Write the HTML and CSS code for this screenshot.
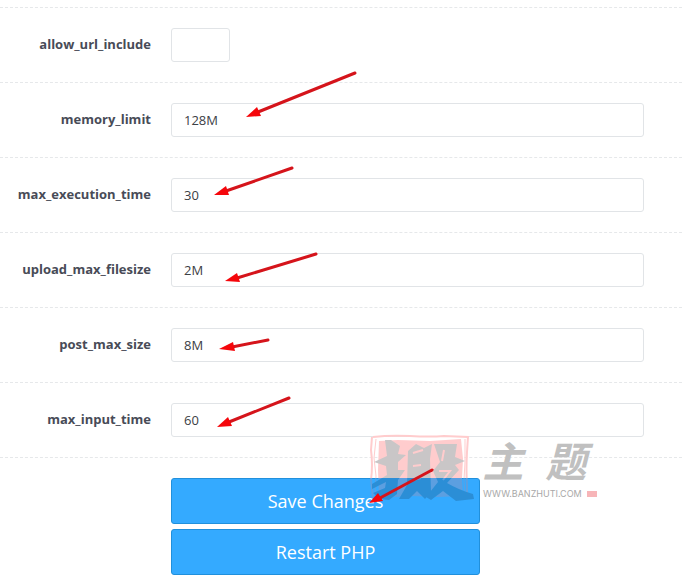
FILE: index.html
```html
<!DOCTYPE html>
<html lang="en">
<head>
<meta charset="utf-8">
<title>PHP Settings</title>
<link rel="stylesheet" href="styles.css">
</head>
<body>
<form class="settings">
  <div class="rows">
    <div class="row"><label for="include">allow_url_include</label><input class="short" id="include" type="text" value=""></div>
    <div class="row"><label for="memory">memory_limit</label><input id="memory" type="text" value="128M"></div>
    <div class="row"><label for="execution">max_execution_time</label><input id="execution" type="text" value="30"></div>
    <div class="row"><label for="upload">upload_max_filesize</label><input id="upload" type="text" value="2M"></div>
    <div class="row"><label for="post">post_max_size</label><input id="post" type="text" value="8M"></div>
    <div class="row"><label for="inputtime">max_input_time</label><input id="inputtime" type="text" value="60"></div>
  </div>
  <div class="actions">
    <button type="button">Save Changes</button>
    <button type="button">Restart PHP</button>
  </div>
</form>
<svg class="overlay" width="682" height="577" viewBox="0 0 682 577">
  <defs>
    <linearGradient id="ink" gradientUnits="userSpaceOnUse" x1="0" y1="430" x2="0" y2="510">
      <stop offset=".6" stop-color="#c9c6c7"/><stop offset=".6" stop-color="#2b8ed6"/>
    </linearGradient>
    <linearGradient id="pink" gradientUnits="userSpaceOnUse" x1="0" y1="430" x2="0" y2="510">
      <stop offset=".6" stop-color="#ffcccd"/><stop offset=".6" stop-color="#5c9fe0"/>
    </linearGradient>
  </defs>
  <path fill="url(#pink)" d="M379 441 L398 440 L430 441 L461 439 L463 459 L462 478 L463 496 L438 497 L412 496 L379 498 L378 470 Z"/>
  <path class="frame" stroke="url(#pink)" d="M373 437 Q390 435 410 436 T444 436 L468 437 L467 452 Q466 470 467 484 L467 498 M372 437 L371 450 Q373 465 371 480 L373 498"/>
  <path class="frame thin" stroke="url(#pink)" d="M376 439 L374 458 L376 476 L375 494 M465 439 L465 462 L464 480 L465 496"/>
  <g fill="url(#ink)">
    <path d="M374 462 L387 456 L385 440 L391 440 L400 446 L398 454 L406 455 L398 462 L398 470 L405 470 L398 480 L397 494 L389 500 L380 499 L373 493 L385 488 L386 482 L372 489 L372 484 L387 475 L386 466 Z"/>
    <path d="M408 451 L416 444 L424 448 L432 444 L430 459 L431 492 L425 499 L417 491 L409 499 L399 499 L407 485 Z"/>
    <path d="M434 444 L457 444 L455 457 L465 461 L455 465 L459 470 L447 483 Q459 490 473 494 L474 499 L456 501 L443 491 L431 500 L426 497 L438 482 L433 471 L440 462 Z"/>
  </g>
  <path class="frame" stroke="url(#pink)" d="M413 453 L423 450 M413 466 L421 465 M413 480 L421 478 M444 450 L442 461 M439 471 L450 471 L443 480"/>
  <g class="brand">
    <text class="hanzi" x="503" y="477">主</text>
    <text class="hanzi" x="566" y="477">题</text>
    <text class="site" x="483" y="497">WWW.BANZHUTI.COM</text>
  </g>
  <path class="tag" d="M587 491 H597 V497 H587 Z"/>
  <g class="arrows">
    <path class="line" d="M355 73 L258 112"/><path class="head" d="M246 117 L257 107 L261 116 Z"/>
    <path class="line" d="M292 168 L226 191"/><path class="head" d="M214 195 L226 186 L229 195 Z"/>
    <path class="line" d="M316 254 L237 278"/><path class="head" d="M225 281 L237 273 L240 282 Z"/>
    <path class="line" d="M268 340 L232 347"/><path class="head" d="M219 349 L233 342 L235 351 Z"/>
    <path class="line" d="M289 398 L229 422"/><path class="head" d="M217 427 L228 417 L232 426 Z"/>
    <path class="line" d="M432 470 L380 498"/><path class="head" d="M369 503 L378 493 L383 501 Z"/>
  </g>
</svg>
</body>
</html>
```

FILE: styles.css
```css
* { box-sizing: border-box; }
body {
  margin: 0;
  position: relative;
  background: #fff;
  font: 13px/20px "Open Sans", sans-serif;
}
.settings { padding-top: 7px; }
.rows { border-top: 1px dashed #e6e8ea; }
.row {
  display: grid;
  grid-template-columns: 151px minmax(0, 1fr);
  column-gap: 20px;
  align-items: center;
  padding: 20px 38px 20px 0;
  border-bottom: 1px dashed #e6e8ea;
}
label {
  padding-bottom: 2px;
  text-align: right;
  font-weight: 700;
  color: #484b57;
}
input {
  width: 100%;
  height: 34px;
  padding: 0 12px;
  border: 1px solid #e1e4e7;
  border-radius: 3px;
  background: #fff;
  color: #3c4045;
  font: inherit;
}
.short { width: 59px; }
.actions {
  display: grid;
  gap: 5px;
  max-width: 480px;
  padding: 20px 0 2px 171px;
}
button {
  height: 46px;
  padding: 0;
  border: 1px solid #2190dc;
  border-radius: 3px;
  background: #34aaff;
  color: #fff;
  font: 18px/24px "Open Sans", sans-serif;
}
.overlay {
  position: absolute;
  top: 0;
  left: 0;
  pointer-events: none;
}
.frame { fill: none; stroke-width: 2; }
.thin { stroke-width: 1; }
.brand { fill: #c0c0c0; }
.hanzi {
  font: italic 700 41px "Noto Sans CJK SC", sans-serif;
  text-anchor: middle;
}
.site { font: 9px Inter, sans-serif; fill: #a8a8a8; }
.tag { fill: #f7b5b8; }
.line { fill: none; stroke: #d5141b; stroke-width: 3; stroke-linecap: round; }
.head { fill: #f5060b; }
```
